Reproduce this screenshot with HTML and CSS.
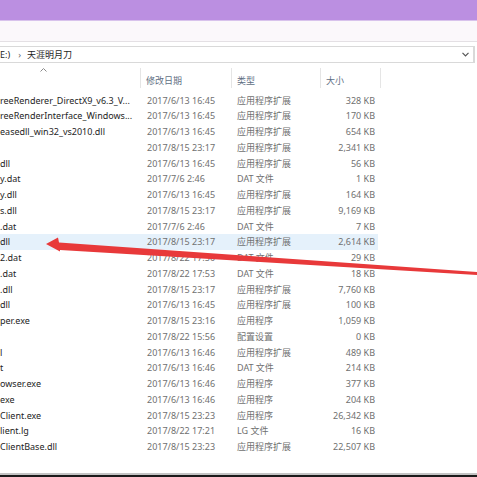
FILE: index.html
```html
<!DOCTYPE html>
<html lang="zh-CN">
<head>
<meta charset="utf-8">
<title>天涯明月刀</title>
<link rel="stylesheet" href="styles.css">
</head>
<body>
<div class="window">
  <div class="titlebar"></div>
  <div class="ribbon"></div>
  <div class="addressrow">
    <div class="address">
      <span class="drive">E:)</span>
      <span class="sep">›</span>
      <span class="crumb">天涯明月刀</span>
      <svg class="chev" width="7" height="5" viewBox="0 0 7 5"><polyline points="0.5,0.8 3.5,3.8 6.5,0.8" fill="none" stroke="#555" stroke-width="1.2"/></svg>
    </div>
    <div class="search"></div>
  </div>
  <div class="header">
    <div class="hcell hname"><svg class="sort" width="7" height="4" viewBox="0 0 7 4"><polyline points="0.5,3.5 3.5,0.5 6.5,3.5" fill="none" stroke="#8a8a8a" stroke-width="1"/></svg></div>
    <div class="hcell">修改日期</div>
    <div class="hcell">类型</div>
    <div class="hcell">大小</div>
  </div>
  <div class="list">
    <div class="row"><span class="name">reeRenderer_DirectX9_v6.3_V...</span><span class="date">2017/6/13 16:45</span><span class="type">应用程序扩展</span><span class="size">328 KB</span></div>
    <div class="row"><span class="name">reeRenderInterface_Windows...</span><span class="date">2017/6/13 16:45</span><span class="type">应用程序扩展</span><span class="size">170 KB</span></div>
    <div class="row"><span class="name">easedll_win32_vs2010.dll</span><span class="date">2017/6/13 16:45</span><span class="type">应用程序扩展</span><span class="size">654 KB</span></div>
    <div class="row"><span class="name"></span><span class="date">2017/8/15 23:17</span><span class="type">应用程序扩展</span><span class="size">2,341 KB</span></div>
    <div class="row"><span class="name">dll</span><span class="date">2017/6/13 16:45</span><span class="type">应用程序扩展</span><span class="size">56 KB</span></div>
    <div class="row"><span class="name">y.dat</span><span class="date">2017/7/6 2:46</span><span class="type">DAT 文件</span><span class="size">1 KB</span></div>
    <div class="row"><span class="name">y.dll</span><span class="date">2017/6/13 16:45</span><span class="type">应用程序扩展</span><span class="size">164 KB</span></div>
    <div class="row"><span class="name">s.dll</span><span class="date">2017/8/15 23:17</span><span class="type">应用程序扩展</span><span class="size">9,169 KB</span></div>
    <div class="row"><span class="name">.dat</span><span class="date">2017/7/6 2:46</span><span class="type">DAT 文件</span><span class="size">7 KB</span></div>
    <div class="row selected"><span class="name">dll</span><span class="date">2017/8/15 23:17</span><span class="type">应用程序扩展</span><span class="size">2,614 KB</span></div>
    <div class="row"><span class="name">2.dat</span><span class="date">2017/8/22 17:50</span><span class="type">DAT 文件</span><span class="size">29 KB</span></div>
    <div class="row"><span class="name">.dat</span><span class="date">2017/8/22 17:53</span><span class="type">DAT 文件</span><span class="size">18 KB</span></div>
    <div class="row"><span class="name">.dll</span><span class="date">2017/8/15 23:17</span><span class="type">应用程序扩展</span><span class="size">7,760 KB</span></div>
    <div class="row"><span class="name">dll</span><span class="date">2017/6/13 16:45</span><span class="type">应用程序扩展</span><span class="size">100 KB</span></div>
    <div class="row"><span class="name">per.exe</span><span class="date">2017/8/15 23:16</span><span class="type">应用程序</span><span class="size">1,059 KB</span></div>
    <div class="row"><span class="name"></span><span class="date">2017/8/22 15:56</span><span class="type">配置设置</span><span class="size">0 KB</span></div>
    <div class="row"><span class="name">l</span><span class="date">2017/6/13 16:46</span><span class="type">应用程序扩展</span><span class="size">489 KB</span></div>
    <div class="row"><span class="name">t</span><span class="date">2017/6/13 16:46</span><span class="type">DAT 文件</span><span class="size">214 KB</span></div>
    <div class="row"><span class="name">owser.exe</span><span class="date">2017/6/13 16:46</span><span class="type">应用程序</span><span class="size">377 KB</span></div>
    <div class="row"><span class="name">exe</span><span class="date">2017/6/13 16:46</span><span class="type">应用程序</span><span class="size">204 KB</span></div>
    <div class="row"><span class="name">Client.exe</span><span class="date">2017/8/15 23:23</span><span class="type">应用程序</span><span class="size">26,342 KB</span></div>
    <div class="row"><span class="name">lient.lg</span><span class="date">2017/8/22 17:21</span><span class="type">LG 文件</span><span class="size">16 KB</span></div>
    <div class="row"><span class="name">ClientBase.dll</span><span class="date">2017/8/15 23:23</span><span class="type">应用程序扩展</span><span class="size">22,507 KB</span></div>
  </div>
  <div class="statusline"></div>
  <div class="taskbar"></div>
  <svg class="arrow" width="477" height="477" viewBox="0 0 477 477">
    <polygon points="46,244 58,237.5 59,242.5 477,272 477,275 60,250 60,251.5" fill="#e8393a"/>
  </svg>
</div>
</body>
</html>
```
FILE: styles.css
```css
html, body {
  margin: 0;
  padding: 0;
  background: #ffffff;
}
body {
  width: 477px;
  height: 477px;
  overflow: hidden;
  font-family: "Noto Sans", "Noto Sans CJK SC", sans-serif;
  font-size: 9px;
}
.window {
  position: relative;
  width: 477px;
  height: 477px;
  display: flex;
  flex-direction: column;
  overflow: hidden;
}
.titlebar {
  height: 20px;
  background: #bb8fe1;
  border-bottom: 1px solid #d8c3ec;
  flex: none;
}
.ribbon {
  height: 20px;
  background: #fbf8fb;
  border-bottom: 1px solid #e4e0e4;
  flex: none;
}
.addressrow {
  display: flex;
  padding-top: 4px;
  height: 18px;
  flex: none;
}
.address {
  flex: 1;
  height: 15px;
  border: 1px solid #d9d9d9;
  border-left: none;
  display: flex;
  align-items: center;
  color: #1e1e1e;
}
.sep { margin-left: 8px; color: #666; }
.crumb { margin-left: 6px; }
.chev {
  margin-left: auto;
  margin-right: 4px;
}
.search {
  width: 2px;
  border-left: 1px solid #d9d9d9;
  height: 17px;
}
.header {
  display: grid;
  grid-template-columns: 141px 91px 89px 60px;
  height: 22px;
  margin-top: 2px;
  flex: none;
  color: #5f6f84;
}
.hcell {
  border-right: 1px solid #e5e5e5;
  padding-left: 5px;
  display: flex;
  align-items: center;
  padding-top: 4px;
  margin-top: 2px;
}
.hname {
  position: relative;
}
.sort {
  position: absolute;
  left: 40px;
  top: 0;
}
.list {
  height: 380.4px;
  padding-top: 4.6px;
  overflow: hidden;
  flex: none;
}
.row {
  display: grid;
  grid-template-columns: 141px 91px 89px 57px;
  height: 15.75px;
  line-height: 15.75px;
  width: 378px;
  white-space: nowrap;
  color: #707070;
}
.selected {
  background: #e5f1fb;
}
.name {
  color: #1e1e1e;
  overflow: hidden;
}
.date { padding-left: 6px; }
.type { padding-left: 5px; }
.size { text-align: right; padding-right: 3px; }
.statusline {
  height: 2px;
  background: #c4c4c4;
  flex: none;
}
.taskbar {
  flex: 1;
  background: #1b1b1b;
}
.arrow {
  position: absolute;
  left: 0;
  top: 0;
  pointer-events: none;
}
```
